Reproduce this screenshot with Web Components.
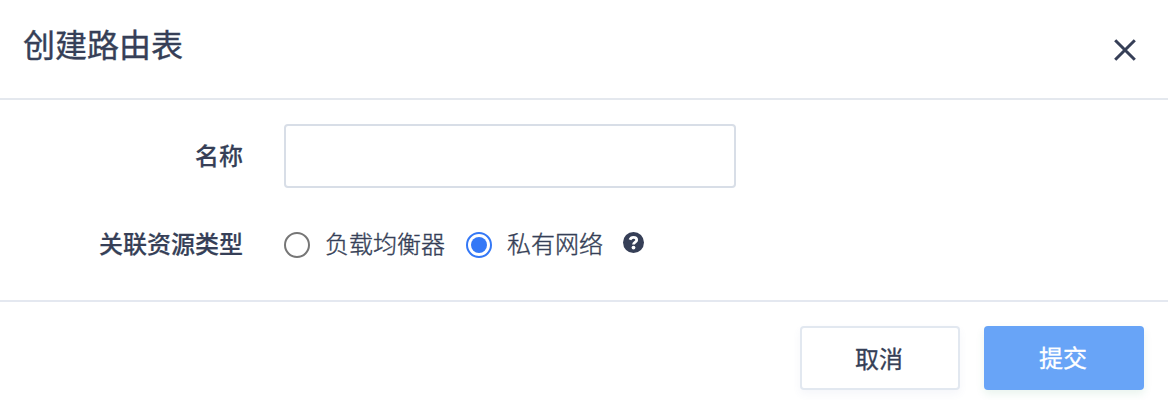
<!DOCTYPE html>
<html lang="zh-CN">
<head>
<meta charset="utf-8">
<title>创建路由表</title>
<style>
  body {
    margin: 0;
    background: #fff;
    color: #363f57;
    font: 24px/32px "Noto Sans CJK SC", sans-serif;
  }
</style>
</head>
<body>
<rt-dialog>
  <span slot="title">创建路由表</span>
  <rt-field label="名称">
    <rt-input></rt-input>
  </rt-field>
  <rt-field label="关联资源类型">
    <rt-radio>负载均衡器</rt-radio>
    <rt-radio checked>私有网络</rt-radio>
    <rt-help></rt-help>
  </rt-field>
  <rt-button slot="footer">取消</rt-button>
  <rt-button slot="footer" variant="primary">提交</rt-button>
</rt-dialog>

<script>
class RtDialog extends HTMLElement {
  constructor() {
    super();

    this.attachShadow({ mode: 'open' });
    this.shadowRoot.innerHTML = `
      <style>
        :host {
          display: flex;
          flex-direction: column;
          block-size: 400px;
          overflow: hidden;
        }

        header {
          display: flex;
          justify-content: space-between;
          box-sizing: border-box;
          block-size: 100px;
          padding: 23px 32px 0 23px;
          border-block-end: 2px solid #e4e8ee;
        }

        h1 {
          margin: 0;
          font-size: 32px;
          font-weight: 400;
          line-height: 40px;
          -webkit-text-stroke: 0.4px currentColor;
        }

        .close {
          inline-size: 22px;
          block-size: 22px;
          padding: 0;
          margin-block-start: 16px;
          border: 0;
          background: none;
          color: inherit;
        }

        svg {
          display: block;
        }

        main {
          display: flex;
          flex-direction: column;
          gap: 24px;
          box-sizing: border-box;
          block-size: 200px;
          padding-block-start: 24px;
        }

        footer {
          display: flex;
          justify-content: flex-end;
          gap: 24px;
          padding: 24px 24px 0;
          border-block-start: 2px solid #e4e8f0;
        }
      </style>
      <header>
        <h1><slot name="title"></slot></h1>
        <button class="close" type="button" aria-label="关闭">
          <svg width="22" height="22" viewBox="0 0 22 22" fill="none" stroke="currentColor" stroke-width="3">
            <path d="M1.2 1.2 20.8 20.8M20.8 1.2 1.2 20.8"/>
          </svg>
        </button>
      </header>
      <main><slot></slot></main>
      <footer><slot name="footer"></slot></footer>
    `;
  }
}

class RtField extends HTMLElement {
  constructor() {
    super();

    this.attachShadow({ mode: 'open' });
  }

  connectedCallback() {
    this.shadowRoot.innerHTML = `
      <style>
        :host {
          display: flex;
          align-items: center;
          gap: 41px;
          min-block-size: 64px;
        }

        .label {
          inline-size: 243px;
          flex: none;
          padding-block-end: 3px;
          font-weight: 500;
          text-align: end;
          -webkit-text-stroke: 0.2px currentColor;
        }

        .control {
          display: flex;
          align-items: center;
        }
      </style>
      <div class="label">${this.getAttribute('label')}</div>
      <div class="control"><slot></slot></div>
    `;
  }
}

class RtInput extends HTMLElement {
  constructor() {
    super();

    this.attachShadow({ mode: 'open' });
    this.shadowRoot.innerHTML = `
      <style>
        :host {
          display: block;
        }

        input {
          display: block;
          box-sizing: border-box;
          inline-size: 452px;
          block-size: 64px;
          padding: 0 16px;
          border: 2px solid #d8dee7;
          border-radius: 4px;
          background: #fff;
          color: inherit;
          font: inherit;
          outline: none;
        }
      </style>
      <input type="text">
    `;
  }
}

class RtRadio extends HTMLElement {
  constructor() {
    super();

    this.attachShadow({ mode: 'open' });
    this.shadowRoot.innerHTML = `
      <style>
        :host {
          display: flex;
          align-items: center;
          gap: 15px;
          margin-inline-end: 21px;
          font-weight: 300;
        }

        .dot {
          display: grid;
          place-items: center;
          box-sizing: border-box;
          inline-size: 26px;
          block-size: 26px;
          margin-block-start: 2px;
          border: 2px solid #767676;
          border-radius: 50%;
        }

        :host([checked]) .dot {
          border-color: #3478f6;
        }

        :host([checked]) .dot::after {
          content: "";
          inline-size: 16px;
          block-size: 16px;
          border-radius: 50%;
          background: #3478f6;
        }

        .text {
          padding-block-end: 2px;
          -webkit-text-stroke: 0.4px currentColor;
        }
      </style>
      <span class="dot"></span>
      <span class="text"><slot></slot></span>
    `;
  }
}

class RtHelp extends HTMLElement {
  constructor() {
    super();

    this.attachShadow({ mode: 'open' });
    this.shadowRoot.innerHTML = `
      <style>
        :host {
          display: block;
          margin-inline-start: -1px;
          margin-block-end: 3px;
        }

        svg {
          display: block;
        }
      </style>
      <svg width="21" height="21" viewBox="0 0 21 21" fill="none">
        <circle cx="10.5" cy="10.5" r="10.5" fill="#363f57"/>
        <path d="M7 7.8C7.6 6 8.8 5.3 10.4 5.3C12.5 5.3 13.7 6.4 13.7 8C13.7 10.2 10.5 10 10.5 12.6" stroke="#fff" stroke-width="2.8"/>
        <circle cx="10.5" cy="15.6" r="1.9" fill="#fff"/>
      </svg>
    `;
  }
}

class RtButton extends HTMLElement {
  constructor() {
    super();

    this.attachShadow({ mode: 'open' });
    this.shadowRoot.innerHTML = `
      <style>
        :host {
          display: block;
        }

        button {
          display: block;
          box-sizing: border-box;
          inline-size: 160px;
          block-size: 64px;
          padding: 0 2px 0 0;
          border: 2px solid #e2e8f0;
          border-radius: 4px;
          background: #fff;
          box-shadow: 0 4px 8px rgba(90, 110, 170, 0.06);
          color: inherit;
          font: inherit;
          -webkit-text-stroke: 0.3px currentColor;
        }

        :host([variant="primary"]) button {
          padding: 0 2px 3px 0;
          border: 0;
          background: #68a4f7;
          box-shadow: 0 4px 8px rgba(40, 150, 90, 0.1);
          color: #fff;
        }
      </style>
      <button type="button"><slot></slot></button>
    `;
  }
}

customElements.define('rt-dialog', RtDialog);
customElements.define('rt-field', RtField);
customElements.define('rt-input', RtInput);
customElements.define('rt-radio', RtRadio);
customElements.define('rt-help', RtHelp);
customElements.define('rt-button', RtButton);
</script>
</body>
</html>
